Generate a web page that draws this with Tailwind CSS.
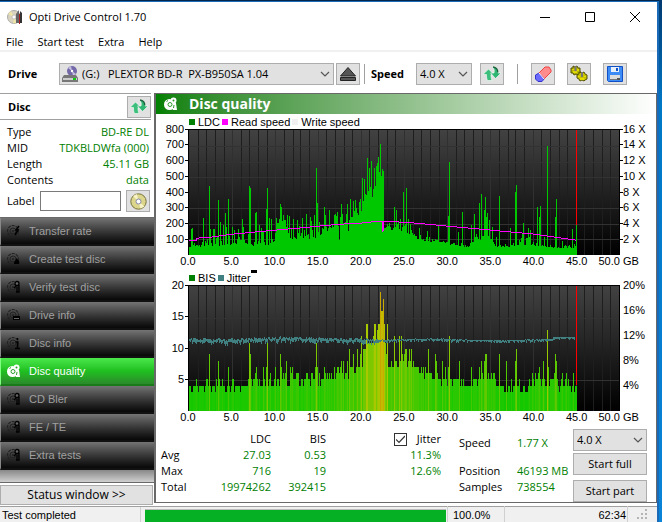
<!DOCTYPE html>
<html lang="en">
<head>
    <meta charset="UTF-8">
    <title>Opti Drive Control 1.70</title>
    <script src="https://cdn.jsdelivr.net/npm/@tailwindcss/browser@4"></script>
</head>
<body class="flex min-h-screen bg-[#0078c8] font-['Open_Sans',sans-serif] text-[11px] leading-4 text-black overflow-hidden">

    <!-- Shared icons -->
    <svg class="hidden">
        <symbol id="chevron" viewBox="0 0 10 6"><path d="M1 1l4 4 4-4" fill="none" stroke="#555" stroke-width="1.2"/></symbol>
        <symbol id="refresh" viewBox="0 0 18 16">
            <path d="M5.500 3L11 8.500H8C8 10.500 8 12 9 14.500H4.500C3.500 12.500 3.500 10.500 3.500 8.500H0Z" fill="#3cbf7b" stroke="#fff" stroke-width=".6"/>
            <path d="M12.500 12.500L18 7H15C15 4 13.500 1.500 9.500 1C11.500 3 11.500 5 11 7H7.500Z" fill="#2fb673" stroke="#fff" stroke-width=".6"/>
            <path d="M10 1C13.500 1.500 14.800 4 14.800 6.500" fill="none" stroke="#17633a" stroke-width="1.300"/>
        </symbol>
        <symbol id="disc" viewBox="0 0 16 16">
            <circle cx="7" cy="8" r="5.500" fill="none" stroke="currentColor" stroke-width="1.200" stroke-dasharray="3 1"/>
            <circle cx="7" cy="8" r="3" fill="none" stroke="currentColor"/>
            <circle cx="7" cy="8" r="1" fill="currentColor"/>
        </symbol>
        <symbol id="magnifier" viewBox="0 0 16 16">
            <circle cx="11" cy="4.500" r="2" fill="#666" stroke="#000" stroke-width="1.300"/>
            <path d="M10 7l-2 2M11 7.500v5M13 6v7h-3" fill="none" stroke="#000" stroke-width="1.300"/>
        </symbol>
        <symbol id="quality" viewBox="0 0 16 16">
            <circle cx="6.500" cy="8.500" r="5.500" fill="#fff"/>
            <circle cx="10.500" cy="4.500" r="3" fill="#fff"/>
            <path d="M9 12l2-5h2l1 7h-4z" fill="#fff"/>
            <circle cx="7" cy="8.500" r="2" fill="none" stroke="#2a9d2a"/>
            <circle cx="10.500" cy="4.500" r="1" fill="#2a9d2a"/>
            <path d="M3.500 5.500l1.500-1M10.500 12l.5-3" stroke="#2a9d2a"/>
        </symbol>
    </svg>

    <div class="flex min-w-0 flex-1 flex-col border-t border-[#04254a]">
        <div class="flex flex-1 flex-col border-t border-r-2 border-[#1a6ab8] bg-white">

            <!-- Title bar -->
            <header class="flex h-[30px] items-center pl-[7px]">
                <svg class="mr-[6px] size-4" viewBox="0 0 16 16">
                    <circle cx="7" cy="8" r="6.500" fill="#d8d3bf" stroke="#aaa"/>
                    <path d="M7 8L1 5l3-3zM7 8l3 6-4 .5z" fill="#efe6a8"/>
                    <circle cx="7" cy="8" r="2" fill="#fff" stroke="#999" stroke-width=".5"/>
                    <path d="M9 5l3-4v13H9z" fill="#666"/>
                    <path d="M12 5h1v10h-1z" fill="#a22"/>
                    <path d="M13 2l2 2v10h-2z" fill="#333"/>
                </svg>
                <h1 class="flex-1">Opti Drive Control 1.70</h1>
                <button aria-label="Minimize" class="flex w-[45px] justify-center"><svg class="size-[10px]" viewBox="0 0 10 10"><path d="M0 5.500h10" stroke="#000"/></svg></button>
                <button aria-label="Maximize" class="flex w-[45px] justify-center"><svg class="size-[10px]" viewBox="0 0 10 10"><path d="M.5.5h9v9h-9z" fill="none" stroke="#000"/></svg></button>
                <button aria-label="Close" class="flex w-[45px] justify-center"><svg class="size-[10px]" viewBox="0 0 10 10"><path d="M0 0l10 10M10 0L0 10" stroke="#000"/></svg></button>
            </header>

            <!-- Menu -->
            <nav class="flex h-5 items-center gap-[14px] border-b-2 border-[#f0f0f0] pl-[6px] pt-[2px]">
                <a href="#">File</a>
                <a href="#">Start test</a>
                <a href="#">Extra</a>
                <a href="#">Help</a>
            </nav>

            <!-- Toolbar -->
            <div class="flex h-[41px] items-center pl-2 pt-[2px]">
                <label for="drive" class="w-[51px] font-bold">Drive</label>
                <div class="relative w-[275px]">
                    <select id="drive" class="h-[22px] w-full appearance-none border border-[#adadad] bg-[#e1e1e1] pl-[22px]">
                        <option>(G:)&nbsp;&nbsp; PLEXTOR BD-R&nbsp; PX-B950SA 1.04</option>
                    </select>
                    <svg class="pointer-events-none absolute left-[3px] top-[3px] size-4" viewBox="0 0 16 16">
                        <circle cx="10" cy="5" r="5" fill="#7468a8"/>
                        <path d="M10 5L6 2l3-2zM10 5l4 3-3 2z" fill="#c4bee0"/>
                        <circle cx="10" cy="5" r="1.200" fill="#fff"/>
                        <path d="M2 9h12l2 3v4H0v-4z" fill="#777"/>
                        <path d="M1 12h14v2H1z" fill="#ccc"/>
                        <path d="M11 12h3v2h-3z" fill="#1c1"/>
                    </svg>
                    <svg class="pointer-events-none absolute right-1 top-2 h-[6px] w-[10px]"><use href="#chevron"/></svg>
                </div>
                <button aria-label="Eject" class="ml-[2px] flex h-[22px] w-6 items-center justify-center border border-[#adadad] bg-[#e1e1e1]">
                    <svg class="h-[14px] w-4" viewBox="0 0 16 14"><path d="M8 .5L15.500 9H.5z" fill="#555" stroke="#222"/><path d="M.5 10.500h15v3H.5z" fill="#555" stroke="#222"/></svg>
                </button>
                <div class="ml-1 h-5 w-px bg-[#a0a0a0]"></div>
                <label for="speed" class="ml-[6px] w-[45px] font-bold">Speed</label>
                <div class="relative w-[56px]">
                    <select id="speed" class="h-[22px] w-full appearance-none border border-[#adadad] bg-[#e1e1e1] pl-[3px]"><option>4.0 X</option></select>
                    <svg class="pointer-events-none absolute right-1 top-2 h-[6px] w-[10px]"><use href="#chevron"/></svg>
                </div>
                <button aria-label="Refresh" class="ml-2 flex h-[22px] w-6 items-center justify-center border border-[#adadad] bg-[#e1e1e1]">
                    <svg class="h-4 w-[18px]"><use href="#refresh"/></svg>
                </button>
                <div class="ml-[13px] h-5 w-px bg-[#a0a0a0]"></div>
                <button aria-label="Erase" class="ml-[13px] flex h-[22px] w-6 items-center justify-center border border-[#adadad] bg-[#e1e1e1]">
                    <svg class="h-4 w-[18px]" viewBox="0 0 18 16">
                        <path d="M5 7L11 1H15L17 4V6L10 13z" fill="#ff8c8c" stroke="#e44"/>
                        <path d="M5 7L1.500 9V13L4 15.500H8L10 13z" fill="#6a6aff" stroke="#33c"/>
                        <path d="M5 7l5 6" stroke="#fff"/>
                    </svg>
                </button>
                <button aria-label="Options" class="ml-3 flex h-[22px] w-6 items-center justify-center border border-[#adadad] bg-[#e1e1e1]">
                    <svg class="h-[17px] w-[18px]" viewBox="0 0 18 17">
                        <path d="M1 3l2 0 0-2 2 1 2-1 1 2 2 0 0 3 1 2-2 1-1 1-2-1-2 1-1-2-2 0z" fill="#b8b400" stroke="#555200"/>
                        <path d="M7 10l2-1 0-2 3 1 2-1 1 2 2 1 0 2 0 2-2 1-1 1-2-1-2 1-1-2-2-1z" fill="#c8c400" stroke="#555200"/>
                        <path d="M5.500 1v6M12 7v5" stroke="#777" stroke-width="2"/>
                        <path d="M3 4v1M8 4v2M3 7h4M9 11v1M15 11v1M10 14h4" stroke="#eee800" stroke-width="1.500"/>
                    </svg>
                </button>
                <button aria-label="Save" class="ml-3 flex h-[22px] w-6 items-center justify-center border border-[#adadad] bg-[#e1e1e1]">
                    <svg class="size-4" viewBox="0 0 16 16">
                        <path d="M.5.500h15v15h-14l-1-1z" fill="#3d8bf5" stroke="#1250c8"/>
                        <path d="M4 1h8v5H4z" fill="#e8f0fa"/><path d="M9 2h2v3H9z" fill="#1250c8"/>
                        <path d="M3 9h10v4H3z" fill="#ddd"/><path d="M3 13h10v1H3z" fill="#777"/><path d="M10 12h3v2h-3z" fill="#555"/>
                    </svg>
                </button>
            </div>

            <div class="flex flex-1">
                <!-- Sidebar -->
                <aside class="flex w-[154px] shrink-0 flex-col">
                    <div class="mr-[3px] flex h-[27px] items-center justify-between border-y border-[#a0a0a0] pl-2">
                        <h2 class="font-bold">Disc</h2>
                        <button aria-label="Refresh disc" class="flex h-[22px] w-6 items-center justify-center border border-[#adadad] bg-[#e1e1e1]">
                            <svg class="h-4 w-[18px]"><use href="#refresh"/></svg>
                        </button>
                    </div>
                    <dl class="mt-1 grid grid-cols-[auto_1fr] pl-[7px] pr-[5px]">
                        <dt>Type</dt><dd class="text-right text-[#008000]">BD-RE DL</dd>
                        <dt>MID</dt><dd class="text-right text-[#008000]">TDKBLDWfa (000)</dd>
                        <dt>Length</dt><dd class="text-right text-[#008000]">45.11 GB</dd>
                        <dt>Contents</dt><dd class="text-right text-[#008000]">data</dd>
                    </dl>
                    <div class="mr-1 mb-[5px] mt-[2px] flex items-center pl-[7px]">
                        <label for="label" class="w-[33px]">Label</label>
                        <input id="label" type="text" class="h-5 w-[81px] border border-[#7a7a7a] px-1">
                        <button aria-label="Read label" class="ml-auto flex h-[22px] w-6 items-center justify-center border border-[#adadad] bg-[#e1e1e1]">
                            <svg class="size-[17px]" viewBox="0 0 17 17">
                                <circle cx="8.500" cy="8.500" r="7.700" fill="#dcd68c" stroke="#77733c"/>
                                <path d="M8.500 8.500L3 3l4-2zM8.500 8.500l6 5-4 2z" fill="#f8f4c8"/>
                                <circle cx="8.500" cy="8.500" r="2.500" fill="#fff" stroke="#88a"/>
                            </svg>
                        </button>
                    </div>

                    <nav class="flex flex-col border-t border-[#696969] font-['Liberation_Sans',sans-serif] text-[#a0a0a0]">
                        <a href="#" class="flex h-7 items-center gap-[7px] border-b-2 border-l border-b-[#111] border-l-[#888] bg-linear-to-b from-[#747474] to-[#080808] pl-[5px]"><svg class="size-4 text-[#222]" viewBox="0 0 16 16"><use href="#disc"/><path d="M13 3l-3 4h2l-3 5" fill="none" stroke="#000" stroke-width="1.500"/></svg>Transfer rate</a>
                        <a href="#" class="flex h-7 items-center gap-[7px] border-b-2 border-l border-b-[#111] border-l-[#888] bg-linear-to-b from-[#747474] to-[#080808] pl-[5px]"><svg class="size-4 text-[#222]" viewBox="0 0 16 16"><use href="#disc"/><path d="M8 13c0-3 2-3 2-6 3 2 4 4 3 6z" fill="#000"/></svg>Create test disc</a>
                        <a href="#" class="flex h-7 items-center gap-[7px] border-b-2 border-l border-b-[#111] border-l-[#888] bg-linear-to-b from-[#747474] to-[#080808] pl-[5px]"><svg class="size-4 text-[#222]" viewBox="0 0 16 16"><use href="#disc"/><use href="#magnifier"/></svg>Verify test disc</a>
                        <a href="#" class="flex h-7 items-center gap-[7px] border-b-2 border-l border-b-[#111] border-l-[#888] bg-linear-to-b from-[#747474] to-[#080808] pl-[5px]"><svg class="size-4 text-[#222]" viewBox="0 0 16 16"><use href="#disc"/><path d="M7 9h7v4H7z" fill="#000"/><path d="M8 11.500h5" stroke="#666"/></svg>Drive info</a>
                        <a href="#" class="flex h-7 items-center gap-[7px] border-b-2 border-l border-b-[#111] border-l-[#888] bg-linear-to-b from-[#747474] to-[#080808] pl-[5px]"><svg class="size-4 text-[#222]" viewBox="0 0 16 16"><use href="#disc"/><path d="M9.500 7h2v6M9 13.500h5M11.500 3v2" fill="none" stroke="#000" stroke-width="1.500"/></svg>Disc info</a>
                        <a href="#" class="flex h-7 items-center gap-[7px] border-b-2 border-l border-b-[#1a7a1a] border-l-[#7fff7f] bg-linear-to-b from-[#4ae84a] via-[#1fc01f] via-50% to-[#2a8a2a] pl-[5px] text-white"><svg class="size-4"><use href="#quality"/></svg>Disc quality</a>
                        <a href="#" class="flex h-7 items-center gap-[7px] border-b-2 border-l border-b-[#111] border-l-[#888] bg-linear-to-b from-[#747474] to-[#080808] pl-[5px]"><svg class="size-4 text-[#222]" viewBox="0 0 16 16"><use href="#disc"/><use href="#magnifier"/></svg>CD Bler</a>
                        <a href="#" class="flex h-7 items-center gap-[7px] border-b-2 border-l border-b-[#111] border-l-[#888] bg-linear-to-b from-[#747474] to-[#080808] pl-[5px]"><svg class="size-4 text-[#222]" viewBox="0 0 16 16"><use href="#disc"/><use href="#magnifier"/></svg>FE / TE</a>
                        <a href="#" class="flex h-7 items-center gap-[7px] border-b-2 border-l border-b-[#111] border-l-[#888] bg-linear-to-b from-[#747474] to-[#080808] pl-[5px]"><svg class="size-4 text-[#222]" viewBox="0 0 16 16"><use href="#disc"/><use href="#magnifier"/></svg>Extra tests</a>
                    </nav>
                    <div class="min-h-[12px] flex-1 border-b border-[#696969] bg-linear-to-b from-[#888] to-[#d0d0d0]"></div>
                    <button class="mr-px mb-px mt-[2px] h-5 border border-[#adadad] bg-[#e1e1e1] text-[12px]">Status window &gt;&gt;</button>
                </aside>

                <!-- Results -->
                <main class="mb-[3px] flex min-w-0 flex-1 flex-col border border-l-2 border-[#696969]">
                    <h2 class="flex h-5 items-center gap-[10px] bg-linear-to-r from-[#008000] to-white pl-[7px] text-[14px] font-bold text-white"><svg class="size-4"><use href="#quality"/></svg>Disc quality</h2>

                    <section class="font-['Liberation_Sans',sans-serif]">
                        <div class="flex h-[15px] items-center pl-[33px]">
                            <i class="mr-[3px] size-[6px] bg-[#008000]"></i>LDC
                            <i class="mr-[3px] ml-[2px] size-[6px] bg-[#ff00ff]"></i>Read speed
                            <i class="mr-[3px] ml-[2px] size-[6px] bg-[#f0f0f0]"></i>Write speed
                        </div>
                        <div class="grid grid-cols-[32px_1fr_36px] leading-[13px]">
                            <div class="flex h-[126px] flex-col justify-between" data-labels="800 700 600 500 400 300 200 100" data-align="right"></div>
                            <svg id="ldc" class="h-[126px] w-full border-t border-l border-black" viewBox="0 0 433 126" preserveAspectRatio="none" shape-rendering="crispEdges"></svg>
                            <div class="flex h-[126px] flex-col justify-between" data-labels="16_X 14_X 12_X 10_X 8_X 6_X 4_X 2_X" data-align="tick"></div>
                            <div class="col-start-2 flex h-[15px] justify-between" data-axis="gb"></div>
                            <span class="pl-[3px]">GB</span>
                        </div>
                    </section>

                    <section class="font-['Liberation_Sans',sans-serif]">
                        <div class="flex h-[15px] items-center pl-[33px]">
                            <i class="mr-[3px] size-[6px] bg-[#008000]"></i>BIS
                            <i class="mr-[3px] ml-[2px] size-[6px] bg-[#408080]"></i>Jitter
                            <i class="h-[3px] w-[6px] self-start bg-black"></i>
                        </div>
                        <div class="grid grid-cols-[32px_1fr_36px] leading-[13px]">
                            <div class="flex h-[126px] flex-col justify-between" data-labels="20 15 10 5" data-align="right"></div>
                            <svg id="bis" class="h-[126px] w-full border-t border-l border-black" viewBox="0 0 433 126" preserveAspectRatio="none" shape-rendering="crispEdges"></svg>
                            <div class="flex h-[126px] flex-col justify-between pl-[3px]" data-labels="20% 16% 12% 8% 4%"></div>
                            <div class="col-start-2 flex h-[15px] justify-between" data-axis="gb"></div>
                            <span class="pl-[3px]">GB</span>
                        </div>
                    </section>

                    <div class="flex pl-[5px] pr-[9px] pt-[2px]">
                        <table class="mt-[3px] self-start">
                            <thead>
                                <tr class="text-right">
                                    <th class="w-[52px]"></th>
                                    <th class="w-[58px] font-normal">LDC</th>
                                    <th class="w-[55px] font-normal">BIS</th>
                                    <th class="w-[115px] font-normal">
                                        <label class="flex h-4 items-center justify-end">
                                            <span class="relative mr-[10px] flex size-[13px]">
                                                <input type="checkbox" checked class="size-[13px] appearance-none border border-[#333] bg-white">
                                                <svg class="pointer-events-none absolute left-[2px] top-[2px] size-[9px]" viewBox="0 0 9 9"><path d="M0 4.500l3 3L9 1" fill="none" stroke="#333" stroke-width="1.200"/></svg>
                                            </span>
                                            Jitter
                                        </label>
                                    </th>
                                </tr>
                            </thead>
                            <tbody class="text-right text-[#008000]">
                                <tr><th class="text-left font-normal text-black">Avg</th><td>27.03</td><td>0.53</td><td>11.3%</td></tr>
                                <tr><th class="text-left font-normal text-black">Max</th><td>716</td><td>19</td><td>12.6%</td></tr>
                                <tr><th class="text-left font-normal text-black">Total</th><td>19974262</td><td>392415</td><td></td></tr>
                            </tbody>
                        </table>
                        <dl class="ml-[18px] mt-[7px] grid flex-1 grid-cols-[58px_1fr] grid-rows-[28px_16px_16px] self-start">
                            <dt>Speed</dt><dd class="text-[#008000]">1.77 X</dd>
                            <dt>Position</dt><dd class="whitespace-nowrap text-[#008000]">46193 MB</dd>
                            <dt>Samples</dt><dd class="text-[#008000]">738554</dd>
                        </dl>
                        <div class="flex w-[74px] shrink-0 flex-col pt-px">
                            <div class="relative">
                                <select aria-label="Test speed" class="h-[22px] w-full appearance-none border border-[#adadad] bg-[#e1e1e1] pl-[3px]"><option>4.0 X</option></select>
                                <svg class="pointer-events-none absolute right-1 top-2 h-[6px] w-[10px]"><use href="#chevron"/></svg>
                            </div>
                            <button class="mt-[2px] h-[22px] border border-[#adadad] bg-[#e1e1e1]">Start full</button>
                            <button class="mt-[5px] h-[22px] border border-[#adadad] bg-[#e1e1e1]">Start part</button>
                        </div>
                    </div>
                </main>
            </div>

            <!-- Status bar -->
            <footer class="flex h-4 items-center border-t border-[#a0a0a0] bg-[#f0f0f0] font-['Liberation_Sans',sans-serif] leading-[15px]">
                <span class="w-[140px] pl-[2px] pt-[2px]">Test completed</span>
                <div class="h-full w-[306px] flex-none border-l border-[#d0d0d0] pt-[2px] pl-1">
                    <div role="progressbar" aria-valuenow="100" class="h-full border-t border-[#bcbcbc] bg-[#06b025]"></div>
                </div>
                <span class="ml-px w-[58px] border-x border-[#d0d0d0] pl-[5px] pt-[2px]">100.0%</span>
                <span class="flex-1 border-r border-[#d0d0d0] pr-px pt-[2px] text-right">62:34</span>
                <svg class="mx-[9px] size-[11px]" viewBox="0 0 11 11"><path d="M8 0h2v2H8zM4 4h2v2H4zM8 4h2v2H8zM0 8h2v2H0zM4 8h2v2H4zM8 8h2v2H8z" fill="#b4b4b4"/></svg>
            </footer>
        </div>
    </div>
    <!-- Desktop behind the window -->
    <div class="w-[3px] bg-linear-to-b from-[#003a70] via-[#0078c8] via-20% to-[#0a84d8]"></div>

    <script>
    // Axis labels: zero-height cells so each one is centred on its tick
    document.querySelectorAll('[data-labels]').forEach(col => {
        const tick = '<i class="h-px w-[3px] bg-black"></i>';
        const align = col.dataset.align;
        col.innerHTML = col.dataset.labels.split(' ').map(t => align === 'right'
            ? `<span class="flex h-0 items-center justify-end gap-px">${t}${tick}</span>`
            : `<span class="flex h-0 items-center whitespace-nowrap">${align ? tick : ''}${t.replace('_', ' ')}</span>`).join('') + '<span></span>';
    });
    document.querySelectorAll('[data-axis]').forEach(row => {
        for (let gb = 0; gb <= 50; gb += 5) {
            row.innerHTML += gb < 50
                ? `<span class="flex w-0 justify-center">${gb.toFixed(1)}</span>`
                : `<span class="flex w-0 justify-end">${gb.toFixed(1)}</span>`;
        }
    });

    let seed = 7;
    const rand = () => (seed = (seed * 16807) % 2147483647) / 2147483647;
    const W = 433, H = 126, END = 389, GB = 8.64;

    // keys: [x, low, high], linear between two keys
    function range(keys, x) {
        let i = 1;
        while (i < keys.length - 1 && keys[i][0] < x) i++;
        const [a, b] = [keys[i - 1], keys[i]];
        const t = (x - a[0]) / (b[0] - a[0]);
        return [a[1] + (b[1] - a[1]) * t, a[2] + (b[2] - a[2]) * t];
    }

    function backdrop(rows, gradientId) {
        let s = `<defs><linearGradient id="${gradientId}" x1="0" y1="0" x2="0" y2="1"><stop offset="0" stop-color="#424242"/><stop offset="1" stop-color="#000"/></linearGradient></defs>`;
        s += `<rect width="${W}" height="${H}" fill="url(#${gradientId})"/>`;
        for (let gb = 1; gb < 50; gb++) {
            s += `<rect x="${Math.round(gb * GB)}" width="1" height="${H}" fill="${gb % 5 ? '#1e1e1e' : '#303030'}"/>`;
        }
        for (let r = 1; r < rows; r++) {
            s += `<rect y="${Math.round(r * H / rows)}" width="${W}" height="1" fill="#323232"/>`;
        }
        return s + `<rect x="${W - 1}" width="1" height="${H}" fill="#000"/>`;
    }

    // Red line where the disc ends
    const endLine = height => `<rect x="${END}" width="1" height="${height}" fill="#ff0000"/>`;

    // LDC, bar heights in px
    const ldcKeys = [[0, 8, 12], [12, 8, 14], [30, 9, 26], [60, 9, 26], [85, 10, 28], [88, 32, 38], [95, 34, 42], [100, 16, 38], [125, 14, 34], [140, 24, 44], [160, 34, 48], [173, 42, 58], [176, 58, 76], [190, 70, 95], [195, 84, 86], [196, 27, 36], [205, 22, 34], [214, 24, 38], [222, 20, 27], [232, 14, 22], [258, 12, 16], [262, 10, 13], [280, 8, 13], [290, 14, 26], [300, 18, 34], [308, 8, 14], [325, 7, 12], [338, 10, 26], [352, 8, 12], [370, 7, 12], [389, 7, 12]];
    const ldcPeaks = {2:26, 3:27, 5:12, 14:37, 20:70, 21:26, 24:26, 25:26, 29:55, 31:33, 34:30, 36:42, 37:28, 39:56, 43:28, 45:25, 49:26, 53:36, 54:28, 60:70, 61:68, 66:42, 67:43, 70:30, 72:27, 77:46, 78:68, 80:37, 82:36, 87:37, 91:51, 92:48, 94:40, 98:40, 100:39, 104:36, 111:29, 114:37, 118:41, 122:38, 126:40, 128:88, 129:52, 136:48, 137:40, 141:45, 146:40, 149:43, 151:15, 153:51, 159:51, 160:24, 162:56, 165:54, 167:55, 172:56, 174:78, 176:77, 179:98, 181:88, 183:95, 184:58, 186:88, 188:90, 189:93, 190:99, 191:84, 192:112, 193:80, 194:87, 195:85, 206:48, 208:45, 215:64, 218:68, 220:36, 222:31, 231:27, 239:24, 250:29, 260:39, 261:94, 270:23, 274:43, 283:30, 286:41, 291:52, 293:61, 296:45, 297:58, 298:38, 299:42, 301:35, 304:28, 308:18, 311:59, 322:27, 328:64, 329:71, 335:22, 336:32, 341:27, 343:25, 350:48, 352:38, 353:49, 357:18, 360:110, 368:38, 369:56, 375:14, 385:26, 389:30};
    let path = '';
    for (let x = 0; x <= END; x++) {
        const [lo, hi] = range(ldcKeys, x);
        const h = ldcPeaks[x] || Math.round(lo + (hi - lo) * rand() * rand());
        path += `M${x} ${H}v-${h}h1v${h}z`;
    }
    const speed = '0,111 8,111 8,109 22,108 43,105 65,103 86,101 108,99 129,97 151,95 172,94 190,92 194,92 194,102 195,102 195,92 217,93 240,95 261,97 304,101 347,105 375,109 389,111';
    document.getElementById('ldc').innerHTML = backdrop(8, 'gradLdc')
        + `<path d="${path}" fill="#00c800"/>` + endLine(96)
        + `<polyline points="${speed}" fill="none" stroke="#ff00ff" stroke-width="1"/>`;

    // BIS, values 0-20; colour shifts from green to amber with the value
    const bisKeys = [[0, 4, 4], [2, 3, 3], [8, 3, 5], [40, 3, 5], [70, 4, 5], [100, 4, 6], [140, 4, 6], [153, 5, 7], [168, 6, 8], [174, 7, 10], [186, 9, 13], [192, 13, 15], [197, 10, 13], [200, 7, 9], [222, 7, 9], [230, 5, 7], [250, 4, 6], [280, 4, 5], [290, 4, 6], [300, 5, 7], [310, 3, 5], [340, 3, 5], [352, 4, 6], [372, 3, 5], [389, 3, 5]];
    const bisPeaks = {20:9, 29:8, 39:7, 60:11, 61:9, 67:7, 66:6, 74:7, 77:7, 78:11, 81:6, 86:7, 91:9, 92:7, 97:8, 101:7, 103:7, 110:6, 119:6, 127:7, 128:11, 129:7, 136:7, 137:6, 141:6, 146:7, 149:7, 150:7, 153:8, 155:8, 159:8, 161:10, 165:9, 169:10, 173:12, 176:10, 178:14, 179:14, 182:11, 184:11, 186:14, 187:14, 190:14, 191:14, 192:19, 193:16, 194:16, 195:18, 196:14, 199:14, 206:12, 211:12, 213:12, 217:10, 218:10, 221:10, 223:10, 225:8, 240:10, 247:9, 248:8, 254:8, 257:7, 260:7, 261:12, 271:8, 283:7, 291:7, 293:8, 296:8, 297:9, 298:9, 311:9, 318:8, 328:8, 329:10, 345:6, 352:7, 356:8, 360:13, 361:7, 367:6, 368:9, 369:8, 375:6, 379:6, 386:6};
    let bars = '';
    for (let x = 0; x <= END; x++) {
        const [lo, hi] = range(bisKeys, x);
        const v = bisPeaks[x] || Math.round(lo + (hi - lo) * rand());
        const h = Math.round(v * H / 20);
        const r = Math.min(200, Math.max(20, (v - 2) * 14)), g = v > 14 ? 200 - (v - 14) * 7 : 200;
        bars += `<rect x="${x}" y="${H - h}" width="1" height="${h}" fill="rgb(${r},${g},0)"/>`;
    }
    let jitter = '';
    for (let x = 0; x < 388; x++) {
        const spread = x < 190 ? 3 : 1;
        const mid = x > 365 ? 51.5 : 54 + Math.sin(x / 22) * 0.7;
        const top = Math.round(mid - rand() * spread);
        jitter += `<rect x="${x}" y="${top}" width="1" height="${x < 190 ? 2 + Math.round(rand() * 3) : 1 + Math.round(rand() * 2)}"/>`;
    }
    document.getElementById('bis').innerHTML = backdrop(4, 'gradBis') + bars + endLine(100) + `<g fill="#408080">${jitter}</g>`;
    </script>
</body>
</html>
